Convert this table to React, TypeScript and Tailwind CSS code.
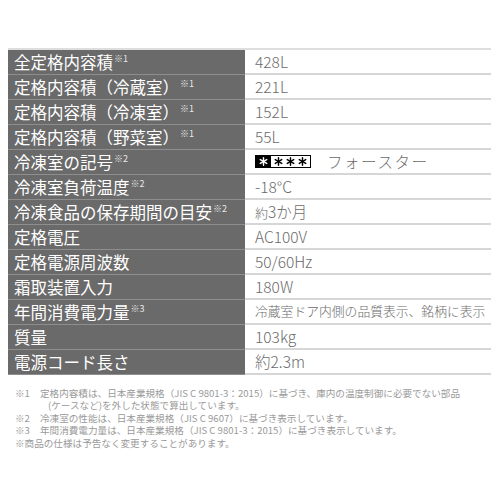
const font = { fontFamily: '"Noto Sans CJK JP", "Noto Sans", sans-serif' };

type Row = { label: string; note?: string; value: React.ReactNode };

function Star({ color }: { color: string }) {
  return (
    <svg width="9" height="9" viewBox="0 0 10 10" stroke={color} strokeWidth="1.6" strokeLinecap="round">
      <line x1="5" y1="0.8" x2="5" y2="9.2" />
      <line x1="1.4" y1="2.9" x2="8.6" y2="7.1" />
      <line x1="1.4" y1="7.1" x2="8.6" y2="2.9" />
    </svg>
  );
}

function FreezerMark() {
  return (
    <span className="flex items-center">
      <span className="flex items-center h-[13px] border-[1.5px] border-black bg-black">
        <span className="flex items-center px-[3px]">
          <Star color="#fff" />
        </span>
        <span className="flex items-center h-full bg-white px-[3px] gap-[3px]">
          <Star color="#000" />
          <Star color="#000" />
          <Star color="#000" />
        </span>
      </span>
      <span className="ml-[16px] tracking-[0.1em]">フォースター</span>
    </span>
  );
}

const rows: Row[] = [
  { label: '全定格内容積', note: '※1', value: '428L' },
  { label: '定格内容積（冷蔵室）', note: '※1', value: '221L' },
  { label: '定格内容積（冷凍室）', note: '※1', value: '152L' },
  { label: '定格内容積（野菜室）', note: '※1', value: '55L' },
  { label: '冷凍室の記号', note: '※2', value: <FreezerMark /> },
  { label: '冷凍室負荷温度', note: '※2', value: '-18°C' },
  {
    label: '冷凍食品の保存期間の目安',
    note: '※2',
    value: (
      <span>
        <span className="text-[13px]">約</span>3か月
      </span>
    ),
  },
  { label: '定格電圧', value: 'AC100V' },
  { label: '定格電源周波数', value: '50/60Hz' },
  { label: '霜取装置入力', value: '180W' },
  {
    label: '年間消費電力量',
    note: '※3',
    value: <span className="text-[12.8px]">冷蔵室ドア内側の品質表示、銘柄に表示</span>,
  },
  { label: '質量', value: '103kg' },
  { label: '電源コード長さ', value: '約2.3m' },
];

export default function App() {
  return (
    <div className="w-[500px] h-[500px] bg-white pt-[48px] pl-[8px] pr-[9px]" style={font}>
      <div className="border-t-2 border-[#dedede]">
        {rows.map((r, i) => (
          <div key={i} className="flex h-[25px]">
            <div className="w-[237px] bg-[#6a6a6a] border-b border-[#8e8e8e] flex items-center pl-[6px] text-white text-[16.5px] leading-none whitespace-nowrap">
              <span>{r.label}</span>
              {r.note && (
                <span className="text-[9px] self-start mt-[4px] ml-[1px] text-[#e8e8e8]">{r.note}</span>
              )}
            </div>
            <div className="flex-1 border-b-2 border-[#d6d6d6] flex items-center pl-[10px] text-[#6b6b6b] text-[15.5px] leading-none font-light whitespace-nowrap">
              {r.value}
            </div>
          </div>
        ))}
      </div>
      <div className="mt-[12px] pl-[7px] text-[9.6px] leading-[12.4px] text-[#9a9a9a] whitespace-nowrap">
        <div className="flex">
          <span className="w-[25px]">※1</span>
          <span>定格内容積は、日本産業規格（JIS C 9801-3：2015）に基づき、庫内の温度制御に必要でない部品</span>
        </div>
        <div className="pl-[33px]">(ケースなど)を外した状態で算出しています。</div>
        <div className="flex">
          <span className="w-[25px]">※2</span>
          <span>冷凍室の性能は、日本産業規格（JIS C 9607）に基づき表示しています。</span>
        </div>
        <div className="flex">
          <span className="w-[25px]">※3</span>
          <span>年間消費電力量は、日本産業規格（JIS C 9801-3：2015）に基づき表示しています。</span>
        </div>
        <div>※商品の仕様は予告なく変更することがあります。</div>
      </div>
    </div>
  );
}
